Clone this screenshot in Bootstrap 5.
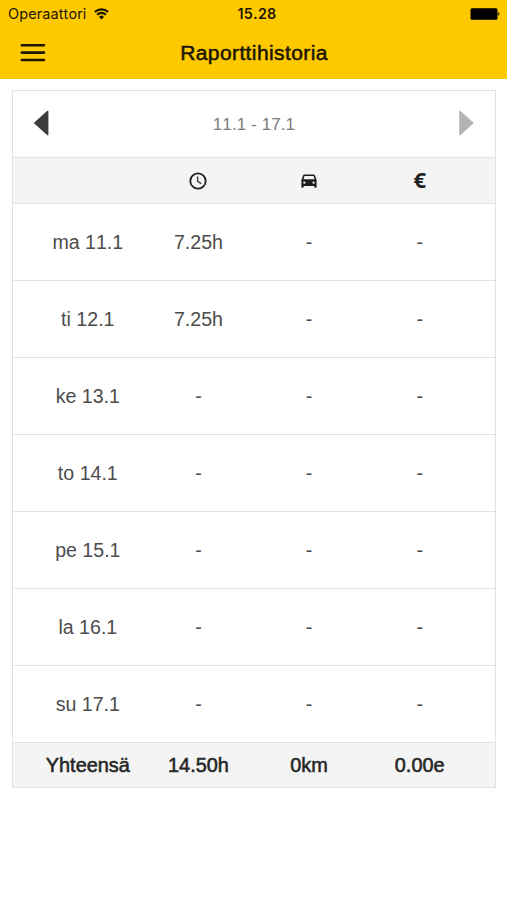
<!DOCTYPE html>
<html lang="fi">
<head>
<meta charset="utf-8">
<meta name="viewport" content="width=device-width, initial-scale=1">
<title>Raporttihistoria</title>
<link rel="stylesheet" href="https://cdn.jsdelivr.net/npm/bootstrap@5.3.0/dist/css/bootstrap.min.css">
<style>
  body { font-family: "Liberation Sans", Arial, sans-serif; font-kerning: none; color: #4c4c4c; font-size: 19.6px; line-height: 24px; }
  .app-top { background: #ffc900; color: #1c1600; height: 79px; }
  .status { height: 27px; padding: 0 7px 0 8px; font-family: Inter, sans-serif; font-size: 14.5px; line-height: 27px; }
  .carrier { letter-spacing: .1px; }
  .clock { font-weight: 600; font-size: 14.3px; letter-spacing: .3px; margin-left: 6px; }
  .title-bar { height: 52px; padding: 0 19px 1px 20px; }
  .title { font-size: 21px; letter-spacing: .4px; }
  .medium { -webkit-text-stroke: .55px currentColor; }
  .report { margin: 11px 11px 0 12px; border: 1px solid #e2e2e2; }
  .period { height: 67px; padding: 0 20px 2px; border-bottom: 1px solid #e2e2e2; font-size: 17px; letter-spacing: .1px; color: #7b7b7b; }
  .line { height: 77px; padding: 0 20px 0 19.5px; border-bottom: 1px solid #e2e2e2; }
  .line-head { height: 46px; background: #f4f4f4; color: #1e1e1e; }
  .line-total { height: 44px; background: #f4f4f4; color: #262626; border-bottom: 0; font-size: 19.9px; }
  .euro { font-family: "Open Sans", sans-serif; font-weight: 700; font-size: 22px; padding-bottom: 3px; }
</style>
<script src="https://cdn.jsdelivr.net/npm/bootstrap@5.3.0/dist/js/bootstrap.bundle.min.js"></script>
</head>
<body class="bg-white">
<header class="app-top">
  <div class="status row g-0 align-items-center">
    <div class="col d-flex align-items-center carrier">Operaattori
      <svg class="ms-2" width="15" height="12" viewBox="0 0 15 12" fill="none" stroke="#1c1600" stroke-width="2.2"><path d="M.8 4a9.7 9.7 0 0 1 13.4 0M3.1 6.7a6.2 6.2 0 0 1 8.8 0"/><path d="M7.5 11.4 5 8.9a3.5 3.5 0 0 1 5 0z" fill="#1c1600" stroke="none"/></svg>
    </div>
    <div class="col-auto clock">15.28</div>
    <div class="col d-flex justify-content-end">
      <svg width="30" height="12" viewBox="0 0 30 12"><rect x=".5" y=".2" width="27" height="11.6" rx="1.5" fill="#000"/><path d="M28.2 4.3a1.8 1.8 0 0 1 0 3.4z" fill="#000"/></svg>
    </div>
  </div>
  <div class="title-bar row g-0 align-items-center">
    <div class="col d-flex">
      <svg role="img" aria-label="Valikko" width="26" height="20" viewBox="0 0 26 20" stroke="#1c1600" stroke-width="2.6" stroke-linecap="round"><path d="M1.8 2.2h22.2M1.8 9.6h22.2M1.8 17h22.2"/></svg>
    </div>
    <h1 class="col-auto title medium mb-0 fw-normal">Raporttihistoria</h1>
    <div class="col"></div>
  </div>
</header>
<main class="report">
  <div class="period d-flex align-items-center justify-content-between">
    <svg role="img" aria-label="Edellinen" width="17" height="26" viewBox="0 0 17 26"><path d="M14.6 1.5 1.8 13l12.8 11.5z" fill="#3d3d3d" stroke="#3d3d3d" stroke-width="1.6" stroke-linejoin="round"/></svg>
    <span class="pt-1">11.1 - 17.1</span>
    <svg role="img" aria-label="Seuraava" width="17" height="26" viewBox="0 0 17 26"><path d="M2 1.5 14.8 13 2 24.5z" fill="#b3b3b3" stroke="#b3b3b3" stroke-width="1.6" stroke-linejoin="round"/></svg>
  </div>
  <div class="line line-head row g-0 align-items-center text-center">
    <div class="col-3"></div>
    <div class="col-3 d-flex justify-content-center"><svg width="18" height="18" viewBox="0 0 18 18" fill="none" stroke="#1e1e1e" stroke-width="1.8"><circle cx="9" cy="9" r="7.7"/><path d="M8.6 4.4v5l3.6 2.2" stroke-width="1.4" stroke="#3a3a3a"/></svg></div>
    <div class="col-3 d-flex justify-content-center"><svg width="16" height="14" viewBox="0 0 16 14"><path fill="#1e1e1e" fill-rule="evenodd" d="M3.3.4h9.4c.6 0 1 .3 1.2.8L15.6 6v7c0 .5-.3.8-.7.8h-.8c-.5 0-.8-.3-.8-.8v-.9H2.7v.9c0 .5-.3.8-.8.8h-.8c-.4 0-.7-.3-.7-.8V6l1.7-4.8C2.3.7 2.7.4 3.3.4zM3.5 1.9 2.4 5.3h11.2l-1.1-3.4zM3.4 7.5a1.15 1.15 0 1 0 0 2.3 1.15 1.15 0 0 0 0-2.3zm9.2 0a1.15 1.15 0 1 0 0 2.3 1.15 1.15 0 0 0 0-2.3z"/></svg></div>
    <div class="col-3 euro">€</div>
  </div>
  <div class="line row g-0 align-items-center text-center"><div class="col-3">ma 11.1</div><div class="col-3">7.25h</div><div class="col-3">-</div><div class="col-3">-</div></div>
  <div class="line row g-0 align-items-center text-center"><div class="col-3">ti 12.1</div><div class="col-3">7.25h</div><div class="col-3">-</div><div class="col-3">-</div></div>
  <div class="line row g-0 align-items-center text-center"><div class="col-3">ke 13.1</div><div class="col-3">-</div><div class="col-3">-</div><div class="col-3">-</div></div>
  <div class="line row g-0 align-items-center text-center"><div class="col-3">to 14.1</div><div class="col-3">-</div><div class="col-3">-</div><div class="col-3">-</div></div>
  <div class="line row g-0 align-items-center text-center"><div class="col-3">pe 15.1</div><div class="col-3">-</div><div class="col-3">-</div><div class="col-3">-</div></div>
  <div class="line row g-0 align-items-center text-center"><div class="col-3">la 16.1</div><div class="col-3">-</div><div class="col-3">-</div><div class="col-3">-</div></div>
  <div class="line row g-0 align-items-center text-center"><div class="col-3">su 17.1</div><div class="col-3">-</div><div class="col-3">-</div><div class="col-3">-</div></div>
  <div class="line line-total medium row g-0 align-items-center text-center"><div class="col-3">Yhteensä</div><div class="col-3">14.50h</div><div class="col-3">0km</div><div class="col-3">0.00e</div></div>
</main>
</body>
</html>
